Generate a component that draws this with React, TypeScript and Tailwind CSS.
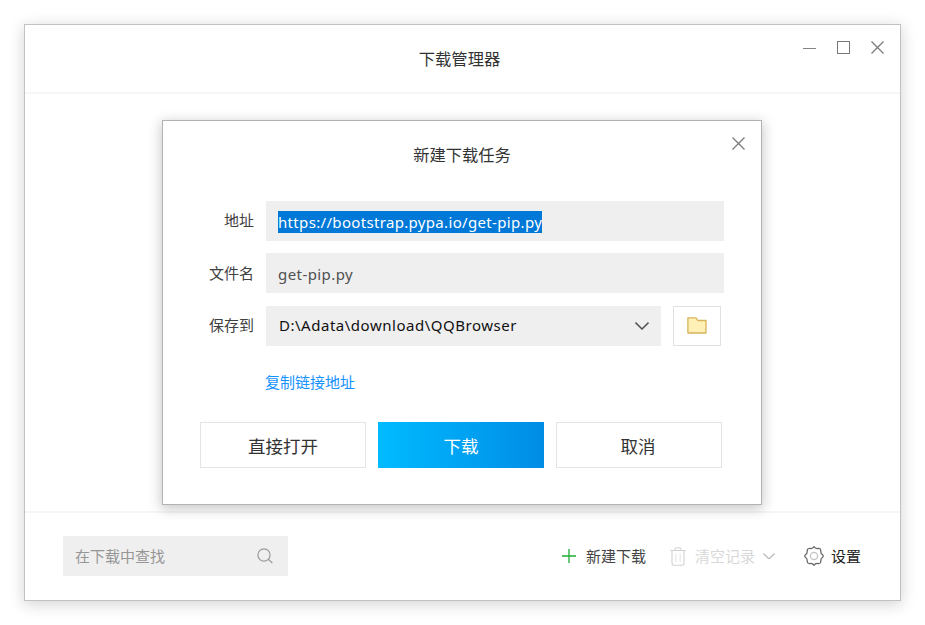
import type { ReactNode } from "react";

const CJK = "font-['Noto_Sans_CJK_SC',sans-serif]";
const LATIN = "font-['Noto_Sans','Noto_Sans_CJK_SC',sans-serif]";

function CloseIcon() {
  return (
    <svg width="13" height="13" viewBox="0 0 13 13" fill="none" stroke="#7c7c7c" strokeWidth="1.3">
      <path d="M.5.5l12 12M12.5.5l-12 12" />
    </svg>
  );
}

function Chevron({ color, size }: { color: string; size: number }) {
  return (
    <svg width={size} height={(size * 8) / 14} viewBox="0 0 14 8" fill="none" stroke={color} strokeWidth="1.5">
      <path d="M.5.6L7 7L13.500.6" />
    </svg>
  );
}

function FolderIcon() {
  return (
    <svg width="20" height="17" viewBox="0 0 20 17" fill="#fff1b5" stroke="#d8b35c" strokeWidth="1.3">
      <path d="M.9.9H9l1.800 2.600H19V16H.9z" strokeLinejoin="round" />
    </svg>
  );
}

function SearchIcon() {
  return (
    <svg width="16" height="16" viewBox="0 0 16 16" fill="none" stroke="#9a9a9a" strokeWidth="1.2">
      <circle cx="7" cy="7" r="6.100" />
      <path d="M11.300 11.300L15.300 15" />
    </svg>
  );
}

function TrashIcon() {
  return (
    <svg width="16" height="19" viewBox="0 0 16 19" fill="none" stroke="#d2d2d2" strokeWidth="1.1">
      <path d="M.3 3.500H15.700M5 3.300V2.200Q5 .8 6.400.8H9.600Q11 .8 11 2.200V3.300M2 3.500V16.500Q2 18.200 3.700 18.200H12.300Q14 18.200 14 16.500V3.500" />
      <path d="M5.800 6.500V15M10.200 6.500V15" stroke="#e6e6e6" />
    </svg>
  );
}

function GearIcon() {
  return (
    <svg width="20" height="20" viewBox="0 0 20 20" fill="none" strokeLinejoin="round">
      <path
        d="M10 .7Q11.400 2.900 13.800 2.500Q16.500 2.200 16.700 4Q16.600 7.600 18.300 8.500Q20.200 10 18.300 11.500Q16.600 12.400 16.700 16Q16.500 17.800 13.800 17.500Q11.400 17.100 10 19.300Q8.600 17.100 6.200 17.500Q3.500 17.800 3.300 16Q3.400 12.400 1.700 11.500Q-.2 10 1.700 8.500Q3.400 7.600 3.300 4Q3.500 2.200 6.200 2.500Q8.600 2.900 10 .7z"
        stroke="#686868"
        strokeWidth="1.3"
      />
      <circle cx="10" cy="10" r="3.600" stroke="#c4c4c4" strokeWidth="1.3" />
    </svg>
  );
}

function Label({ children }: { children: ReactNode }) {
  return <div className="w-[91px] shrink-0 pb-px text-right text-[15px] text-[#404040]">{children}</div>;
}

function Dialog() {
  return (
    <section className="absolute left-[138px] top-[96px] flex h-[385px] w-[600px] flex-col border border-[#b2b2b2] bg-white shadow-[0_3px_12px_1px_rgba(0,0,0,0.22)]">
      <header className="relative flex h-[80px] shrink-0 items-start justify-center pt-[21px] text-[16.300px] leading-6 text-[#333]">
        <h2>新建下载任务</h2>
        <button className="absolute right-[16px] top-[16px]"><CloseIcon /></button>
      </header>
      <div className="flex flex-col gap-[12.400px]">
        <div className="flex h-10 items-center gap-[12px]">
          <Label>地址</Label>
          <div className={`${LATIN} flex h-full w-[458px] items-center bg-[#efefef] pl-3 text-[15px] text-white`}>
            <span className="flex h-[22px] w-[264px] translate-y-px items-center whitespace-nowrap bg-[#0078d7] tracking-[0.330px]">https://bootstrap.pypa.io/get-pip.py</span>
          </div>
        </div>
        <div className="flex h-10 items-center gap-[12px]">
          <Label>文件名</Label>
          <div className={`${LATIN} flex h-full w-[458px] items-center bg-[#efefef] pl-3 pt-0.5 text-[15px] tracking-[0.430px] text-[#505050]`}>get-pip.py</div>
        </div>
        <div className="flex h-10 items-center gap-[12px]">
          <Label>保存到</Label>
          <div className={`${LATIN} flex h-full w-[395px] items-center justify-between bg-[#efefef] pl-[13px] pr-[12px] text-[15px] tracking-[0.520px] text-[#111]`}>
            <span className="-translate-y-px">D:\Adata\download\QQBrowser</span>
            <Chevron color="#555" size={14} />
          </div>
          <button className="flex h-10 w-[48px] items-center justify-center border border-[#e2e2e2]"><FolderIcon /></button>
        </div>
      </div>
      <a className="ml-[102px] mt-[24px] text-[15px] leading-6 text-[#1492ff]">复制链接地址</a>
      <div className="ml-[37px] mt-[28px] flex gap-[12px] text-[17.500px] text-[#333]">
        <button className="h-[46px] w-[166px] border border-[#e4e4e4] pt-0.5">直接打开</button>
        <button className="h-[46px] w-[166px] bg-linear-to-r from-[#00bbff] to-[#008ce6] pt-0.5 text-white">下载</button>
        <button className="h-[46px] w-[166px] border border-[#e4e4e4] pr-0.5 pt-0.5">取消</button>
      </div>
    </section>
  );
}

export default function App() {
  return (
    <div className={`${CJK} h-[625px] w-[925px] overflow-hidden bg-white pl-6 pt-6`}>
      <main className="relative flex h-[577px] w-[877px] flex-col border border-[#c2c2c2] bg-white shadow-[0_3px_14px_1px_rgba(0,0,0,0.16)]">
        <header className="relative flex h-[69px] shrink-0 items-center justify-center border-b-2 border-[#f6f6f6] text-[16.300px] text-[#333]">
          <h1 className="-translate-x-[3px]">下载管理器</h1>
          <div className="absolute right-[16px] top-[16px] flex items-center gap-[21px]">
            <span className="h-[1.500px] w-[13px] translate-y-px bg-[#858585]" />
            <span className="h-[13px] w-[13px] border border-[#777]" />
            <CloseIcon />
          </div>
        </header>
        <div className="flex-1" />
        <footer className="flex h-[89px] shrink-0 items-center border-t-2 border-[#f6f6f6] pb-px pl-[37.500px] text-[15px]">
          <div className="flex h-10 w-[225px] items-center justify-between bg-[#efefef] pl-[12.500px] pr-[15px] text-[#969696]">
            <span>在下载中查找</span>
            <SearchIcon />
          </div>
          <div className="ml-[274.500px] flex items-center">
            <svg width="14" height="14" viewBox="0 0 14 14" stroke="#20ad35" strokeWidth="1.300">
              <path d="M0 7H14M7 0V14" />
            </svg>
            <span className="ml-[10px] text-[#444]">新建下载</span>
            <span className="ml-[24px]"><TrashIcon /></span>
            <span className="ml-[9px] text-[#d8d8d8]">清空记录</span>
            <span className="ml-[8px]"><Chevron color="#b8b8b8" size={12} /></span>
            <span className="ml-[29px]"><GearIcon /></span>
            <span className="ml-[7px] text-[#222]">设置</span>
          </div>
        </footer>
      </main>
      <div className="relative -mt-[577px]">
        <Dialog />
      </div>
    </div>
  );
}
